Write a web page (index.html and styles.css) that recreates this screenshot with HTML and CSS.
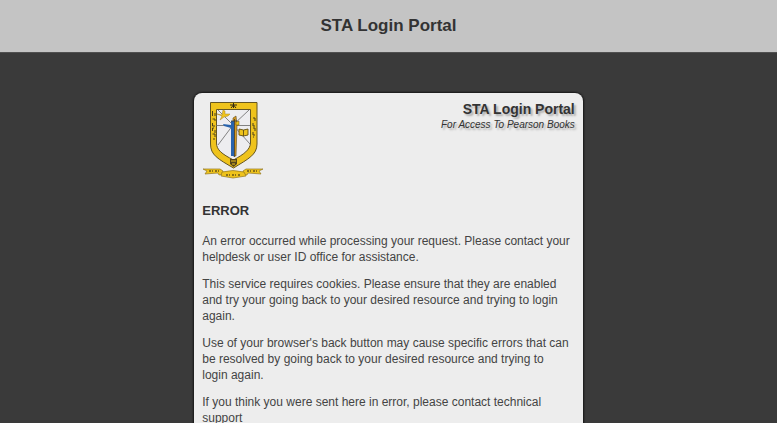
FILE: index.html
```html
<!DOCTYPE html>
<html lang="en">
<head>
<meta charset="UTF-8">
<meta name="viewport" content="width=device-width, initial-scale=1.0">
<title>STA Login Portal</title>
<link rel="stylesheet" href="styles.css">
</head>
<body>

<header class="topbar">
  <h1>STA Login Portal</h1>
</header>

<main class="card">
  <div class="brand">
    <svg class="crest" viewBox="0 0 62 78" role="img" aria-label="School crest">
      <!-- shield -->
      <path d="M8.500 1.500H55V43C55 54 46 58 31.500 67C16 58 8.500 54 8.500 43Z" fill="#efc31c" stroke="#665621"/>
      <path d="M14.500 8.500H48.500V42C48 49 42 53 31.500 59C20 53 14.500 49 14.500 42Z" fill="#ededf0" stroke="#665621"/>
      <path d="M14 24.500H48M31 24L16 9M31 24L47 9M31 24L16 44M31 24L48 43" stroke="#666" stroke-width=".8" fill="none"/>
      <path d="M31.500 2V7M28 4H35M29 7L31.500 4L34 7" stroke="#332b10" fill="none"/>
      <!-- side lettering -->
      <path d="M10.500 10V15M13 12V15M10.500 18H13V20M10.500 22V25H13M12 27H10.500V30M13 29V32M10.500 33H13V36M11 38H13" stroke="#4b4016" fill="none"/>
      <path d="M51 17H53V20M51 22V25H53M51 27H53V30M51 31V34H53M52 36H51" stroke="#4b4016" fill="none"/>
      <!-- dove -->
      <path d="M15 13L20 14L21 9L23 10L23 13L28 13L26 15L22 16L18 19L20 15Z" fill="#efc31c" stroke="#a88723" stroke-width=".5"/>
      <!-- figure and staff -->
      <path d="M31 17L34 15L35 24L34 55H31Z" fill="#d79a20" stroke="#5d4b21" stroke-width=".6"/>
      <path d="M21 23L29 24V20H32V55H29V27L22 25Z" fill="#2863ad"/>
      <path d="M32.500 18V56M29 20H35" stroke="#3b3b31" stroke-width=".8"/>
      <path d="M34 21L37 20V24H34Z" fill="#efc31c" stroke="#6a5514" stroke-width=".5"/>
      <!-- book -->
      <path d="M37 28L41.500 29L46 28V34L41.500 35L37 34ZM41.500 29V35" fill="#efc31c" stroke="#604d13" stroke-width=".9"/>
      <path d="M28 58H35V63L31.500 66L28 63Z" fill="#54451a"/>
      <path d="M29 60H34M30 63H33" stroke="#efc31c"/>
      <!-- ribbon -->
      <path d="M1 68H18L21 70V73L17 74L16 72L3 73L5 70Z" fill="#efc31c" stroke="#927720" stroke-width=".7"/>
      <path d="M61 68H44L41 70V73L45 74L46 72L59 73L57 70Z" fill="#efc31c" stroke="#927720" stroke-width=".7"/>
      <path d="M20 71Q31 68 42 71L44 75L31 77L19 75Z" fill="#efc31c" stroke="#927720" stroke-width=".7"/>
      <path d="M7 70H17M45 70H55M24 74H39" stroke="#6b5817" stroke-width="1.5" stroke-dasharray="2 1 1 2" fill="none"/>
    </svg>
    <div class="titles">
      <p class="title">STA Login Portal</p>
      <p class="tagline">For Access To Pearson Books</p>
    </div>
  </div>

  <section class="message">
    <h2>ERROR</h2>
    <p>An error occurred while processing your request. Please contact your helpdesk or user ID office for assistance.</p>
    <p>This service requires cookies. Please ensure that they are enabled and try your going back to your desired resource and trying to login again.</p>
    <p>Use of your browser's back button may cause specific errors that can be resolved by going back to your desired resource and trying to login again.</p>
    <p>If you think you were sent here in error, please contact technical support</p>
  </section>
</main>

</body>
</html>
```
FILE: styles.css
```css
html {
  overflow-x: hidden;
  scrollbar-width: none;
}

body {
  margin: 0;
  font-family: "Liberation Sans", Arial, sans-serif;
  font-size: 12px;
  line-height: 16px;
  color: #333;
  background: #3a3a3a;
}

h1,
h2,
p {
  margin: 0;
}

.topbar {
  padding: 16px;
  text-align: center;
  background: #c4c4c4;
  border-bottom: 1px solid #505050;
}

.topbar h1 {
  font-size: 17px;
  line-height: 20px;
}

.card {
  box-sizing: border-box;
  width: 50%;
  margin: 40px auto;
  padding: 8px;
  background: #ededed;
  border-radius: 8px;
  box-shadow: 0 0 2px 1px #161616;
}

.brand {
  display: flex;
  justify-content: space-between;
}

.crest {
  display: block;
  width: 62px;
  height: 78px;
}

.titles {
  text-align: right;
  text-shadow: 2px 2px 2px #aaa;
}

.title {
  font-size: 14px;
  font-weight: bold;
}

.tagline {
  font-size: 10px;
  font-style: italic;
}

.message {
  padding: 24px 3px 0 0;
}

.message h2 {
  margin-bottom: 14px;
  font-size: 13px;
}

.message p {
  margin-bottom: 11px;
  color: #444;
}
```
